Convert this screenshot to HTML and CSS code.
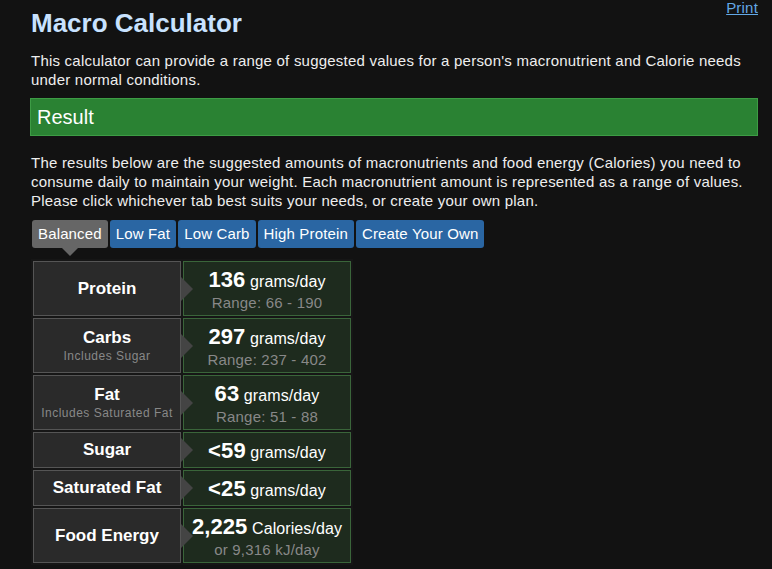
FILE: index.html
```html
<!DOCTYPE html>
<html>
<head>
<meta charset="utf-8">
<link rel="stylesheet" href="styles.css">
</head>
<body>
<div class="page">
  <div class="header">
    <h1 class="title">Macro Calculator</h1>
    <a class="print" href="#">Print</a>
  </div>
  <p class="intro">This calculator can provide a range of suggested values for a person's macronutrient and Calorie needs under normal conditions.</p>
  <div class="result-bar">Result</div>
  <p class="desc">The results below are the suggested amounts of macronutrients and food energy (Calories) you need to consume daily to maintain your weight. Each macronutrient amount is represented as a range of values. Please click whichever tab best suits your needs, or create your own plan.</p>
  <div class="tabs">
    <span class="tab active">Balanced</span>
    <span class="tab">Low Fat</span>
    <span class="tab">Low Carb</span>
    <span class="tab">High Protein</span>
    <span class="tab">Create Your Own</span>
  </div>
  <div class="table">
    <div class="row tall">
      <div class="label"><div class="name">Protein</div></div>
      <div class="value"><div class="main"><b>136</b> grams/day</div><div class="sub">Range: 66 - 190</div></div>
    </div>
    <div class="row tall">
      <div class="label"><div class="name">Carbs</div><div class="note">Includes Sugar</div></div>
      <div class="value"><div class="main"><b>297</b> grams/day</div><div class="sub">Range: 237 - 402</div></div>
    </div>
    <div class="row tall">
      <div class="label"><div class="name">Fat</div><div class="note">Includes Saturated Fat</div></div>
      <div class="value"><div class="main"><b>63</b> grams/day</div><div class="sub">Range: 51 - 88</div></div>
    </div>
    <div class="row short">
      <div class="label"><div class="name">Sugar</div></div>
      <div class="value"><div class="main"><b>&lt;59</b> grams/day</div></div>
    </div>
    <div class="row short">
      <div class="label"><div class="name">Saturated Fat</div></div>
      <div class="value"><div class="main"><b>&lt;25</b> grams/day</div></div>
    </div>
    <div class="row tall">
      <div class="label"><div class="name">Food Energy</div></div>
      <div class="value"><div class="main"><b>2,225</b> Calories/day</div><div class="sub">or 9,316 kJ/day</div></div>
    </div>
  </div>
</div>
</body>
</html>
```
FILE: styles.css
```css
html, body {
  margin: 0;
  padding: 0;
  background: #121212;
}
body {
  font-family: "Liberation Sans", Arial, sans-serif;
  color: #eeeeee;
}
.page {
  margin: 0 14px 0 30px;
}
.header {
  display: flex;
  justify-content: space-between;
  align-items: flex-start;
}
.title {
  margin: 7px 0 0 1px;
  font-size: 26px;
  line-height: 32px;
  font-weight: bold;
  color: #c8e2ff;
}
.print {
  font-size: 15px;
  line-height: 15px;
  color: #62a8e6;
  text-decoration: underline;
  margin-top: 0;
  letter-spacing: 0.2px;
}
.intro {
  margin: 12px 0 0 1px;
  font-size: 15px;
  line-height: 19px;
  letter-spacing: 0.22px;
}
.result-bar {
  margin-top: 9px;
  box-sizing: border-box;
  height: 38px;
  border: 1px solid #3d9c45;
  background: #2a8233;
  color: #ffffff;
  font-size: 20px;
  line-height: 36px;
  padding-left: 6px;
}
.desc {
  margin: 17px 0 0 1px;
  font-size: 15px;
  line-height: 19px;
  letter-spacing: 0.22px;
}
.tabs {
  display: flex;
  gap: 2px;
  margin: 10px 0 0 2px;
}
.tab {
  position: relative;
  display: block;
  height: 28px;
  line-height: 28px;
  padding: 0 6px;
  font-size: 15px;
  letter-spacing: 0.15px;
  color: #ffffff;
  background: #2a66a3;
  border-radius: 3px;
}
.tab.active {
  background: #666666;
}
.tab.active::after {
  content: "";
  position: absolute;
  left: 30px;
  top: 28px;
  border-left: 8px solid transparent;
  border-right: 8px solid transparent;
  border-top: 8px solid #666666;
}
.table {
  display: inline-flex;
  flex-direction: column;
  gap: 2px;
  padding: 2px;
  margin: 11px 0 0 1px;
  background: #161616;
}
.row {
  display: flex;
  gap: 2px;
}
.row.tall { height: 55px; }
.row.short { height: 36px; }
.label {
  position: relative;
  box-sizing: border-box;
  width: 148px;
  border: 1px solid #555555;
  background: #2a2a2a;
  display: flex;
  flex-direction: column;
  justify-content: center;
  align-items: center;
}
.label::after {
  content: "";
  position: absolute;
  right: -13px;
  top: 50%;
  margin-top: -12px;
  border-top: 12px solid transparent;
  border-bottom: 12px solid transparent;
  border-left: 12px solid #444444;
  z-index: 1;
}
.name {
  font-size: 17px;
  font-weight: bold;
  color: #ffffff;
  line-height: 20px;
}
.note {
  font-size: 12px;
  color: #888888;
  line-height: 16px;
  letter-spacing: 0.5px;
}
.value {
  box-sizing: border-box;
  width: 168px;
  padding-top: 3px;
  border: 1px solid #3a653a;
  background: #1e2b1e;
  display: flex;
  flex-direction: column;
  justify-content: center;
  align-items: center;
}
.main {
  font-size: 16px;
  line-height: 22px;
  color: #ffffff;
  letter-spacing: 0.1px;
}
.main b {
  font-size: 22px;
}
.sub {
  font-size: 15px;
  line-height: 19px;
  color: #888888;
  letter-spacing: 0.2px;
}
```
